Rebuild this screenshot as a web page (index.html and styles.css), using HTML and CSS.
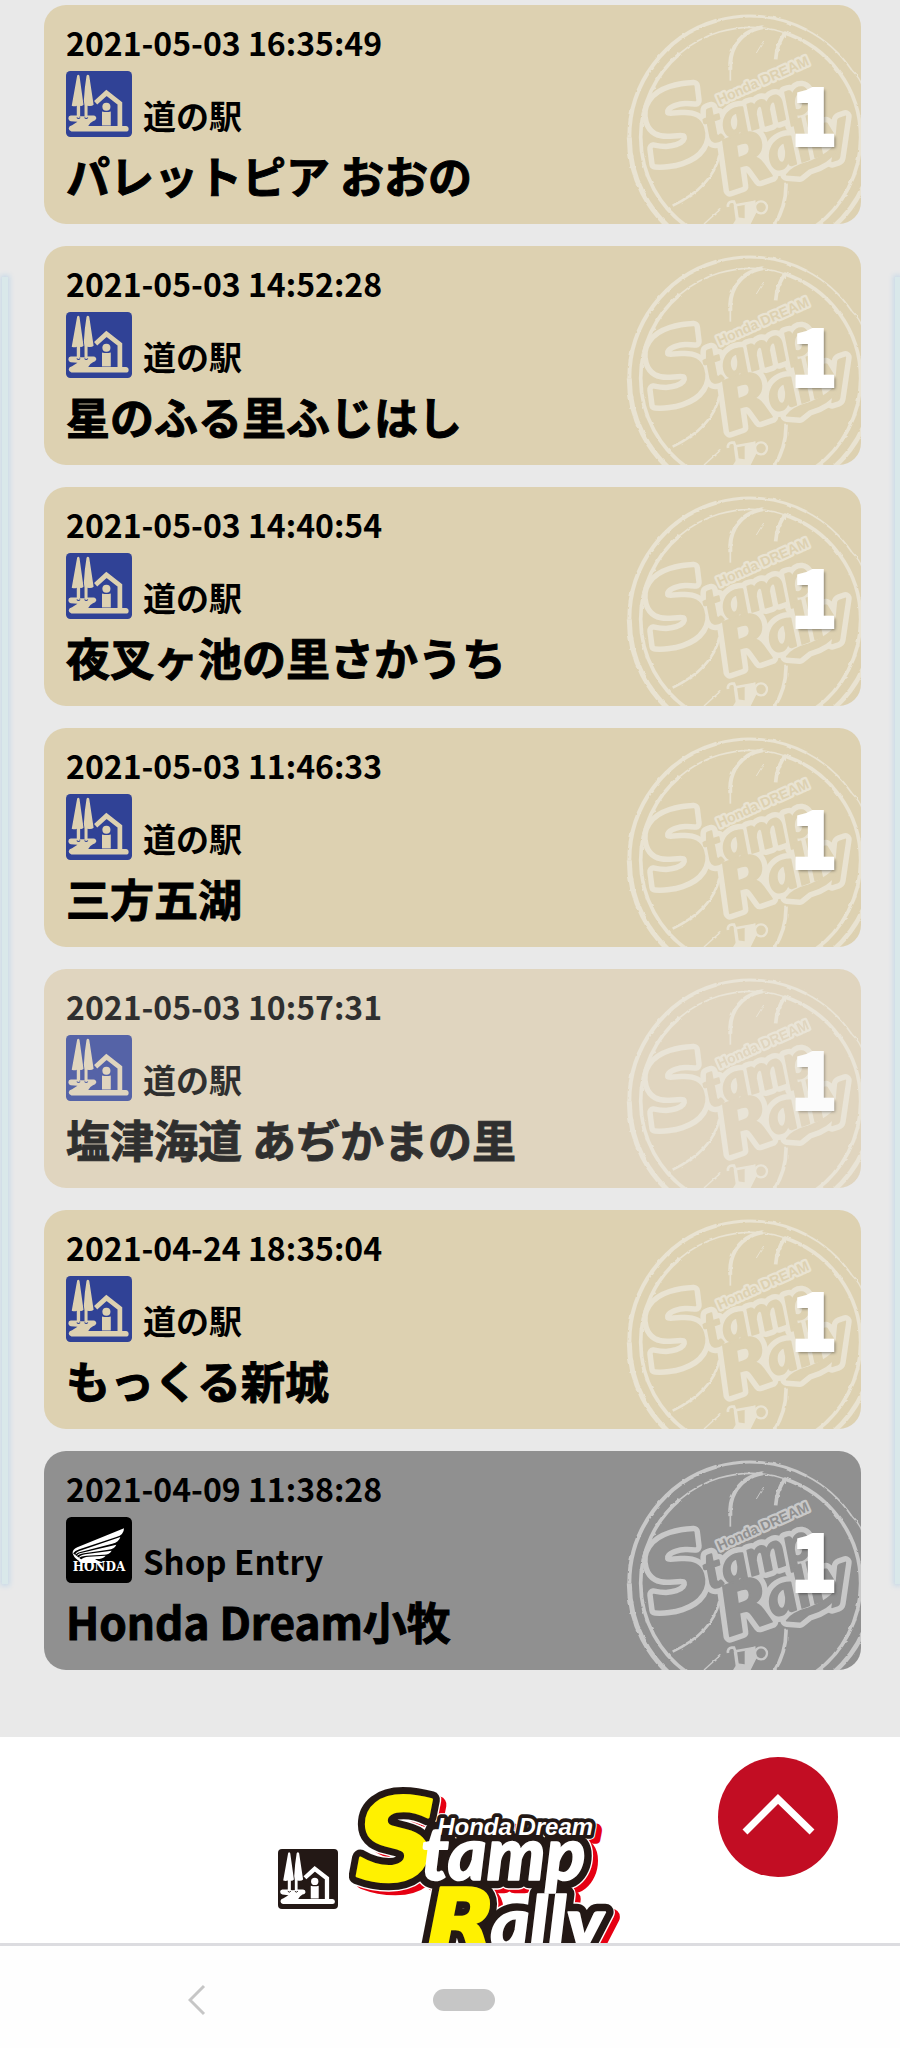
FILE: index.html
```html
<!DOCTYPE html>
<html lang="ja">
<head>
  <meta charset="UTF-8">
  <meta name="viewport" content="width=device-width, initial-scale=1">
  <title>Honda Dream Stamp Rally</title>
  <link rel="stylesheet" href="styles.css">
</head>
<body>
  <!-- 共通アイコン -->
  <svg class="defs" width="0" height="0" aria-hidden="true">
    <defs>
      <symbol id="michinoeki" viewBox="0 0 196 196">
        <rect width="196" height="196" rx="13" fill="currentColor"/>
        <g class="cut">
          <path d="M33 14Q36 8 40 14L52 100Q46 106 42 103V134H32V103Q25 106 17 103Z"/>
          <path d="M61 14Q65 8 69 14L82 100Q76 106 64 103V134H55V103L53 88L56 50Z"/>
          <path d="M14 132H32Q48 137 64 132H82Q90 133 90 141Q88 148 80 149Q72 153 66 163H178Q186 164 186 172Q186 180 178 180H16Q8 178 8 170Q9 163 18 161L34 151L14 149Q7 147 7 140Q7 133 14 132Z"/>
          <circle cx="120" cy="106" r="12"/>
          <path d="M107 120Q120 124 133 120V162H107Z"/>
        </g>
        <path class="cut-line" d="M88 94L120 65L160 96V168"/>
        <path d="M32 138Q37 144 42 138M55 138Q60 144 65 138" fill="none" stroke="currentColor" stroke-width="3"/>
      </symbol>

      <symbol id="honda" viewBox="0 0 198 198">
        <rect width="198" height="198" rx="16"/>
        <g fill="#fff">
          <path d="M20 110Q18 98 34 91L174 34Q174 54 151 60L40 97Q27 101 20 110Z"/>
          <path d="M28 113Q29 105 42 101L163 60Q159 76 139 80L46 104Q35 106 28 113Z"/>
          <path d="M31 119Q34 109 48 107L151 83Q145 97 127 98L54 109Q38 111 31 119Z"/>
          <path d="M36 124Q43 114 58 112L137 101Q130 114 112 113L62 116Q45 117 36 124Z"/>
          <path d="M43 130Q52 119 68 119L119 116Q111 127 87 126Q91 131 115 138H57L49 133Z"/>
          <path d="M20 108Q23 121 35 129L49 138H60L37 121Z"/>
        </g>
        <text class="honda-word" x="99" y="162">HONDA</text>
      </symbol>

      <filter id="rough" x="-5%" y="-5%" width="110%" height="110%">
        <feTurbulence type="fractalNoise" baseFrequency="0.05" numOctaves="2" seed="4"/>
        <feDisplacementMap in="SourceGraphic" scale="7" xChannelSelector="R" yChannelSelector="G"/>
      </filter>

      <g id="stamp-letters">
        <g transform="translate(196 498) rotate(-18)">
          <text class="script capital" font-size="278" x="-30" y="-6">S</text>
          <text class="script" font-size="150" x="146" y="-22">tamp</text>
        </g>
        <g transform="translate(398 572) rotate(-19)">
          <text class="script capital" font-size="205" x="-12" y="-4">R</text>
          <text class="script" font-size="168" x="134" y="-14">ally</text>
        </g>
        <path d="M560 524Q578 500 622 488Q690 464 718 420L716 446Q684 490 626 506L600 527Z"/>
      </g>

      <!-- スタンプの透かし -->
      <symbol id="stamp" viewBox="75 15 708 657">
        <g class="ink-line" filter="url(#rough)">
          <path d="M788 262Q781 235 755 210" stroke-width="4"/>
          <path d="M755 210A364 364 0 0 0 620 90" stroke-width="5"/>
          <path d="M620 90A364 364 0 0 0 350 62" stroke-width="9"/>
          <path d="M350 62A364 364 0 0 0 88 412" stroke-width="12"/>
          <path d="M88 412A364 364 0 0 0 240 709" stroke-width="15"/>
          <path d="M792 555A364 364 0 0 1 664 709" stroke-width="14"/>
          <path d="M490 84A330 330 0 0 0 240 160" stroke-width="5"/>
          <path d="M240 160A330 330 0 0 0 122 412A330 330 0 0 0 270 686" stroke-width="11"/>
          <path d="M490 84Q525 88 552 98" stroke-width="4"/>
          <path d="M552 98A330 330 0 0 1 782 412A330 330 0 0 1 640 684" stroke-width="11"/>
          <path d="M488 82Q432 92 405 138Q388 168 391 210" stroke-width="12"/>
          <path d="M391 195V242" stroke-width="5"/>
          <path d="M556 98Q530 132 527 178" stroke-width="11"/>
          <path d="M491 123L469 159" stroke-width="3"/>
          <path d="M358 466Q338 560 218 617" stroke-width="8"/>
          <path d="M361 628L312 672" stroke-width="4"/>
          <path d="M558 548Q560 620 520 680" stroke-width="11"/>
        </g>
        <g class="ink-line">
          <circle cx="483" cy="622" r="18" stroke-width="7"/>
          <path d="M384 621Q382 606 395 605H402L406 616L462 606" stroke-width="8"/>
          <path d="M406 616L412 660" stroke-width="10"/>
        </g>
        <path class="ink" d="M434 614L466 600L470 636L448 680H394L412 652L434 655Z"/>
        <use class="stamp-outline" href="#stamp-letters"/>
        <g transform="translate(359 314) rotate(-24)">
          <text class="stamp-name">Honda DREAM</text>
        </g>
        <use class="stamp-face" href="#stamp-letters"/>
      </symbol>

      <g id="logo-letters">
        <text class="script capital" font-size="345" x="284" y="331">S</text>
        <text class="script" font-size="222" x="482" y="330">tamp</text>
        <text class="script capital" font-size="275" x="496" y="552">R</text>
        <text class="script" font-size="224" x="690" y="542">ally</text>
      </g>
      <text id="logo-name" class="logo-name" x="530" y="197">Honda Dream</text>
    </defs>
  </svg>

  <main class="history">
    <ul class="cards">
      <li class="card">
        <time class="date" datetime="2021-05-03T16:35:49">2021-05-03 16:35:49</time>
        <div class="kind"><svg class="icon" aria-hidden="true"><use href="#michinoeki"/></svg><span>道の駅</span></div>
        <h2 class="place">パレットピア おおの</h2>
        <svg class="stamp" viewBox="0 0 236 219" aria-hidden="true"><use href="#stamp"/></svg>
        <span class="point">1</span>
      </li>
      <li class="card">
        <time class="date" datetime="2021-05-03T14:52:28">2021-05-03 14:52:28</time>
        <div class="kind"><svg class="icon" aria-hidden="true"><use href="#michinoeki"/></svg><span>道の駅</span></div>
        <h2 class="place">星のふる里ふじはし</h2>
        <svg class="stamp" viewBox="0 0 236 219" aria-hidden="true"><use href="#stamp"/></svg>
        <span class="point">1</span>
      </li>
      <li class="card">
        <time class="date" datetime="2021-05-03T14:40:54">2021-05-03 14:40:54</time>
        <div class="kind"><svg class="icon" aria-hidden="true"><use href="#michinoeki"/></svg><span>道の駅</span></div>
        <h2 class="place">夜叉ヶ池の里さかうち</h2>
        <svg class="stamp" viewBox="0 0 236 219" aria-hidden="true"><use href="#stamp"/></svg>
        <span class="point">1</span>
      </li>
      <li class="card">
        <time class="date" datetime="2021-05-03T11:46:33">2021-05-03 11:46:33</time>
        <div class="kind"><svg class="icon" aria-hidden="true"><use href="#michinoeki"/></svg><span>道の駅</span></div>
        <h2 class="place">三方五湖</h2>
        <svg class="stamp" viewBox="0 0 236 219" aria-hidden="true"><use href="#stamp"/></svg>
        <span class="point">1</span>
      </li>
      <li class="card card-faded">
        <time class="date" datetime="2021-05-03T10:57:31">2021-05-03 10:57:31</time>
        <div class="kind"><svg class="icon" aria-hidden="true"><use href="#michinoeki"/></svg><span>道の駅</span></div>
        <h2 class="place">塩津海道 あぢかまの里</h2>
        <svg class="stamp" viewBox="0 0 236 219" aria-hidden="true"><use href="#stamp"/></svg>
        <span class="point">1</span>
      </li>
      <li class="card">
        <time class="date" datetime="2021-04-24T18:35:04">2021-04-24 18:35:04</time>
        <div class="kind"><svg class="icon" aria-hidden="true"><use href="#michinoeki"/></svg><span>道の駅</span></div>
        <h2 class="place">もっくる新城</h2>
        <svg class="stamp" viewBox="0 0 236 219" aria-hidden="true"><use href="#stamp"/></svg>
        <span class="point">1</span>
      </li>
      <li class="card card-shop">
        <time class="date" datetime="2021-04-09T11:38:28">2021-04-09 11:38:28</time>
        <div class="kind"><svg class="icon" aria-hidden="true"><use href="#honda"/></svg><span>Shop Entry</span></div>
        <h2 class="place">Honda Dream小牧</h2>
        <svg class="stamp" viewBox="0 0 236 219" aria-hidden="true"><use href="#stamp"/></svg>
        <span class="point">1</span>
      </li>
    </ul>
  </main>

  <footer class="footer">
    <svg class="footer-icon" role="img" aria-label="道の駅"><use href="#michinoeki"/></svg>
    <svg class="logo" viewBox="265 40 820 480" role="img" aria-label="Honda Dream Stamp Rally">
      <g transform="translate(19 15)">
        <use class="logo-red" href="#logo-letters"/>
        <use class="logo-red thin" href="#logo-name"/>
      </g>
      <use class="logo-white" href="#logo-letters"/>
      <use class="logo-white thin" href="#logo-name"/>
      <use class="logo-black" href="#logo-letters"/>
      <use class="logo-black thin" href="#logo-name"/>
      <text class="script capital yellow" font-size="345" x="284" y="331">S</text>
      <text class="script white" font-size="222" x="482" y="330">tamp</text>
      <text class="script capital yellow" font-size="275" x="496" y="552">R</text>
      <text class="script white" font-size="224" x="690" y="542">ally</text>
      <use class="name-face" href="#logo-name"/>
    </svg>
    <a class="to-top" href="#" aria-label="ページの先頭へ">
      <svg viewBox="0 0 120 120" aria-hidden="true"><path d="M27 75L60 42L94 75"/></svg>
    </a>
  </footer>

  <nav class="navbar">
    <button class="nav-button" type="button" aria-label="戻る">
      <svg width="18" height="32" viewBox="0 0 18 32" aria-hidden="true"><path d="M16 2L2 16L16 30"/></svg>
    </button>
    <button class="nav-button" type="button" aria-label="ホーム"><span class="pill"></span></button>
  </nav>
</body>
</html>
```
FILE: styles.css
```css
* {
  box-sizing: border-box;
}
body {
  margin: 0;
  min-height: 100vh;
  display: flex;
  flex-direction: column;
  background-color: #fff;
  color: #000;
  font-family: "Noto Sans CJK JP", sans-serif;
}
.defs {
  position: absolute;
}

/* 履歴一覧 */
.history {
  position: relative;
  padding: 5px 39px 67px 44px;
  background-color: #e9e9e9;
}
.history::before,
.history::after {
  content: "";
  position: absolute;
  top: 277px;
  bottom: 153px;
  width: 6px;
  background-color: #d9e8ea;
  box-shadow: 0 0 5px 2px #c9dae8;
}
.history::before {
  left: 2px;
}
.history::after {
  right: 0;
  width: 5px;
}
.cards {
  display: flex;
  flex-direction: column;
  gap: 22px;
  margin: 0;
  padding: 0;
  list-style: none;
}
.card {
  --card: #ddd1b1;
  --ink: #e9e3d2;
  position: relative;
  overflow: hidden;
  padding: 15px 22px 17px;
  border-radius: 22px;
  background-color: var(--card);
}
.card-faded {
  --card: #ded0b4;
  opacity: 0.8;
}
.card-shop {
  --card: #909090;
  --ink: #c8c8c8;
}
.date {
  display: block;
  font-size: 32px;
  font-weight: 700;
  line-height: 44px;
}
.kind {
  display: flex;
  align-items: flex-end;
  gap: 11px;
  margin-top: 7px;
  font-size: 33px;
  font-weight: 700;
  line-height: 44px;
}
.icon {
  width: 66px;
  height: 66px;
  color: #304296;
}
.cut {
  fill: var(--card);
}
.cut-line {
  fill: none;
  stroke: var(--card);
  stroke-width: 14;
}
.place {
  margin: 6px 0 0;
  font-size: 44px;
  font-weight: 700;
  line-height: 64px;
  -webkit-text-stroke: 1px;
}
.point {
  position: absolute;
  top: 67px;
  right: 23px;
  color: #fff;
  font-size: 78px;
  font-weight: 900;
  line-height: 80px;
  text-shadow: 2px 2px 3px rgba(0,0,0,0.4);
  -webkit-text-stroke: 2px;
}

/* スタンプ */
.stamp {
  position: absolute;
  top: 0;
  right: 0;
  width: 236px;
  height: 219px;
}
.ink {
  fill: var(--ink);
}
.ink-line {
  fill: none;
  stroke: var(--ink);
}
.script {
  font-family: Lato, sans-serif;
  font-style: italic;
  font-weight: 900;
}
.capital {
  font-family: "DejaVu Sans", sans-serif;
  font-weight: 700;
}
.stamp-outline {
  fill: var(--ink);
  stroke: var(--ink);
  stroke-width: 38;
  stroke-linejoin: round;
}
.stamp-face {
  fill: var(--card);
  stroke: var(--card);
  stroke-width: 5;
  stroke-linejoin: round;
}
.stamp-name {
  fill: var(--card);
  stroke: var(--ink);
  stroke-width: 14;
  stroke-linejoin: round;
  paint-order: stroke;
  font-family: "Liberation Sans", sans-serif;
  font-size: 42px;
  font-weight: 700;
}
.honda-word {
  fill: #fff;
  font-family: "DejaVu Serif", serif;
  font-size: 36px;
  font-weight: 700;
  text-anchor: middle;
}

/* フッター */
.footer {
  position: relative;
  display: flex;
  justify-content: center;
  align-items: flex-end;
  gap: 11px;
  height: 206px;
  overflow: hidden;
}
.footer-icon {
  --card: #fff;
  width: 60px;
  height: 60px;
  margin-bottom: 34px;
  color: #231815;
}
.logo {
  width: 273px;
  height: 160px;
}
.logo-name {
  font-family: "Liberation Sans", sans-serif;
  font-size: 72px;
  font-style: italic;
  font-weight: 700;
}
.logo-red,
.logo-white,
.logo-black {
  stroke-linejoin: round;
  stroke-width: 50;
}
.logo-red {
  fill: #e60012;
  stroke: #e60012;
}
.logo-white {
  fill: #fff;
  stroke: #fff;
  stroke-width: 58;
}
.logo-black {
  fill: #231815;
  stroke: #231815;
}
.logo-red.thin,
.logo-black.thin {
  stroke-width: 22;
}
.logo-white.thin {
  stroke-width: 28;
}
.yellow {
  fill: #fff100;
  stroke: #fff100;
  stroke-width: 8;
  stroke-linejoin: round;
}
.white {
  fill: #fff;
  stroke: #fff;
  stroke-width: 5;
  stroke-linejoin: round;
}
.name-face {
  fill: #fff;
}
.to-top {
  position: absolute;
  top: 20px;
  right: 62px;
  width: 120px;
  height: 120px;
  border-radius: 50%;
  background-color: #c20d23;
}
.to-top path {
  fill: none;
  stroke: #fff;
  stroke-width: 7;
}

/* ナビゲーションバー */
.navbar {
  flex: 1;
  display: grid;
  grid-template-columns: repeat(3, 1fr);
  align-items: center;
  min-height: 105px;
  padding: 5px 36px 0 63px;
  border-top: 3px solid #dcdce0;
  background-color: #fefefe;
}
.nav-button {
  display: flex;
  justify-content: center;
  align-items: center;
  height: 48px;
  padding: 0;
  border: 0;
  background: none;
}
.nav-button path {
  fill: none;
  stroke: #c6c6c6;
  stroke-width: 3;
}
.pill {
  width: 62px;
  height: 22px;
  border-radius: 11px;
  background-color: #c6c6c6;
}
```
